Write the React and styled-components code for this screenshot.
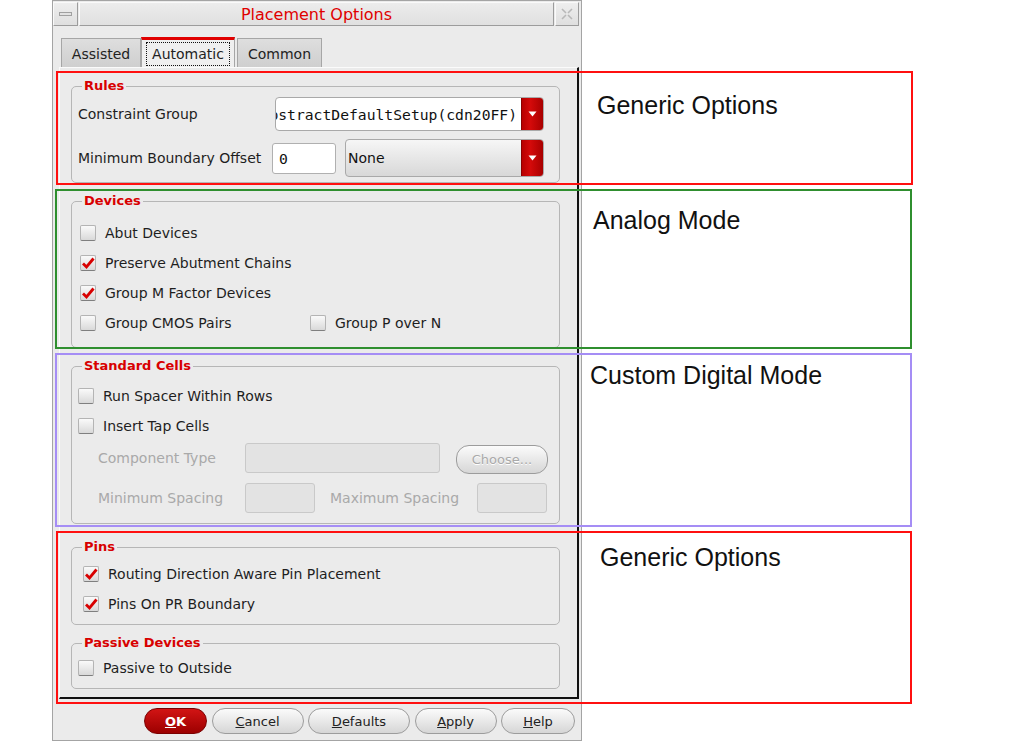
import React from 'react';
import styled, { createGlobalStyle } from 'styled-components';

const GlobalStyle = createGlobalStyle`
  * { box-sizing: border-box; }
  html, body { margin: 0; padding: 0; background: #fff; }
  body { font-family: "DejaVu Sans", sans-serif; color: #1e1e1e; }
`;

const Stage = styled.div`
  position: relative;
  width: 1013px;
  height: 744px;
  padding-left: 52px;
  background: #fff;
`;

const Dialog = styled.div`
  width: 530px;
  height: 741px;
  border: 1px solid #a4a4a4;
  background: #ebebeb;
  display: flex;
  flex-direction: column;
`;

const TitleBar = styled.div`
  display: flex;
  height: 24px;
  margin: 1px 2px 0 0;
  gap: 1px;
`;

const TitleButton = styled.div`
  width: ${p => p.$w}px;
  flex: none;
  display: flex;
  align-items: center;
  justify-content: center;
  background: linear-gradient(#eeeeee, #dfdfdf);
  border: 1px solid;
  border-color: #fafafa #9c9c9c #9c9c9c #fafafa;
`;

const MinGlyph = styled.span`
  width: 13px;
  height: 4px;
  border: 1px solid #a0a0a0;
  background: #e2e2e2;
`;

const TitleText = styled.div`
  flex: 1;
  display: flex;
  align-items: center;
  justify-content: center;
  font-size: 16px;
  color: #e00000;
  background: linear-gradient(#ececec, #e0e0e0);
  border: 1px solid;
  border-color: #fafafa #9c9c9c #9c9c9c #fafafa;
`;

const TabRow = styled.div`
  display: flex;
  align-items: flex-end;
  height: 30px;
  margin-top: 11px;
  padding-left: 8px;
`;

const Tab = styled.div`
  width: ${p => p.$w}px;
  height: ${p => (p.$active ? 30 : 29)}px;
  display: flex;
  align-items: center;
  justify-content: center;
  font-size: 14px;
  color: #222;
  background: ${p => (p.$active ? '#efefef' : 'linear-gradient(#dedede, #cfcfcf)')};
  border: 1px solid #a6a6a6;
  border-bottom: none;
  border-top: ${p => (p.$active ? '3px solid #e00000' : '1px solid #a6a6a6')};
  margin-right: ${p => p.$mr || 0}px;
  padding-top: ${p => (p.$active ? 0 : 2)}px;
`;

const FocusRect = styled.span`
  display: flex;
  align-items: center;
  justify-content: center;
  width: calc(100% - 8px);
  height: calc(100% - 3px);
  border: 1px dotted #111;
`;

const Panel = styled.div`
  height: 632px;
  margin: 0 2px 0 6px;
  border-left: 1px solid #fbfbfb;
  border-top: 1px solid #fbfbfb;
  border-right: 2px solid #111;
  border-bottom: 2px solid #111;
  padding: 0 17px 0 11px;
  display: flex;
  flex-direction: column;
`;

const Group = styled.fieldset`
  margin: ${p => p.$mt}px 0 0;
  height: ${p => p.$h}px;
  padding: 0;
  border: 1px solid #b6b6b6;
  border-radius: 5px;
  min-width: 0;
`;

const Legend = styled.legend`
  margin-left: 10px;
  padding: 0 2px;
  font-weight: bold;
  font-size: 13px;
  line-height: 14px;
  color: #d80000;
`;

const GroupBody = styled.div`
  display: flex;
  flex-direction: column;
  padding: ${p => p.$pad};
`;

const Row = styled.div`
  display: flex;
  align-items: center;
  height: ${p => p.$h || 30}px;
  margin-top: ${p => p.$mt || 0}px;
  padding-left: ${p => p.$indent || 0}px;
`;

const FieldLabel = styled.span`
  font-size: 14px;
  color: ${p => (p.$disabled ? '#a9a9a9' : '#1e1e1e')};
  width: ${p => (p.$w ? `${p.$w}px` : 'auto')};
  flex: ${p => (p.$w ? 'none' : 1)};
  margin-left: ${p => p.$ml || 0}px;
  white-space: nowrap;
`;

const Combo = styled.div`
  width: ${p => p.$w}px;
  height: ${p => p.$h}px;
  flex: none;
  display: flex;
  border: 1px solid #a9a9a9;
  border-radius: 4px;
  overflow: hidden;
  background: ${p => (p.$white ? '#fff' : 'linear-gradient(#f6f6f6, #d8d8d8)')};
`;

const ComboText = styled.div`
  flex: 1;
  min-width: 0;
  overflow: hidden;
  display: flex;
  align-items: center;
  justify-content: ${p => (p.$end ? 'flex-end' : 'flex-start')};
  padding: ${p => (p.$end ? '0 4px 0 0' : '0 0 0 2px')};
  font-family: ${p => (p.$mono ? '"DejaVu Sans Mono", monospace' : '"DejaVu Sans", sans-serif')};
  font-size: ${p => (p.$mono ? '14.7px' : '14px')};
  color: #111;
  white-space: nowrap;

  span { flex: none; }
`;

const ArrowButton = styled.div`
  width: 22px;
  flex: none;
  display: flex;
  align-items: center;
  justify-content: center;
  background: linear-gradient(90deg, #b80000, #d40a0a 40%, #a80000);
  border-left: 1px solid #8a0000;
`;

const TextInput = styled.div`
  width: ${p => p.$w}px;
  height: ${p => p.$h || 30}px;
  flex: none;
  display: flex;
  align-items: center;
  padding-left: 6px;
  margin-left: ${p => p.$ml || 0}px;
  margin-right: ${p => p.$mr || 0}px;
  font-family: "DejaVu Sans Mono", monospace;
  font-size: 14.7px;
  color: #111;
  border: 1px solid ${p => (p.$disabled ? '#c9c9c9' : '#b0b0b0')};
  border-radius: 3px;
  background: ${p => (p.$disabled ? '#e3e3e3' : '#fff')};
`;

const CheckItem = styled.label`
  display: flex;
  align-items: center;
  gap: 9px;
  width: ${p => (p.$w ? `${p.$w}px` : 'auto')};
  font-size: 14px;
  color: #1e1e1e;
  white-space: nowrap;
`;

const CheckBox = styled.span`
  width: 16px;
  height: 16px;
  flex: none;
  border-radius: 2px;
  border: 1px solid #b4b4b4;
  border-bottom-color: #7f7f7f;
  background: linear-gradient(#fafafa, #d9d9d9);
  display: flex;
  align-items: center;
  justify-content: center;
`;

const PillButton = styled.div`
  width: ${p => p.$w}px;
  height: ${p => p.$h || 26}px;
  flex: none;
  display: flex;
  align-items: center;
  justify-content: center;
  border-radius: 13px;
  font-size: 13px;
  border: 1px solid ${p => (p.$primary ? '#7a0000' : '#9c9c9c')};
  background: ${p =>
    p.$primary ? 'linear-gradient(#d21414, #9c0000)' : 'linear-gradient(#fbfbfb, #d6d6d6)'};
  color: ${p => (p.$primary ? '#fff' : p.$disabled ? '#a9a9a9' : '#222')};
  font-weight: ${p => (p.$primary ? 'bold' : 'normal')};
  margin-left: ${p => p.$ml || 0}px;
  margin-top: ${p => p.$mt || 0}px;
  text-shadow: ${p => (p.$disabled ? '0 1px 0 #fff' : 'none')};
`;

const Footer = styled.div`
  display: flex;
  justify-content: flex-end;
  gap: 4.5px;
  height: 26px;
  margin-top: 9px;
  padding-right: 6px;
`;

const Callout = styled.div`
  position: absolute;
  left: ${p => p.$x}px;
  top: ${p => p.$y}px;
  width: ${p => p.$w}px;
  height: ${p => p.$h}px;
  border: 2px solid ${p => p.$color};
  padding: ${p => p.$pt}px 0 0 ${p => p.$pl}px;
  font-family: "Liberation Sans", Arial, sans-serif;
  font-size: 25px;
  line-height: 25px;
  color: #111;
  pointer-events: none;
`;

const Arrow = () => (
  <svg width="9" height="6" viewBox="0 0 9 6">
    <path d="M0.5 0.5 H8.5 L4.5 5.5 Z" fill="#fff" />
  </svg>
);

const Check = ({ on }) => (
  <CheckBox>
    {on && (
      <svg width="14" height="14" viewBox="0 0 14 14">
        <path d="M2 7.5 L5.5 11 L12.5 2.5" fill="none" stroke="#d80000" strokeWidth="2.8" strokeLinejoin="miter" />
      </svg>
    )}
  </CheckBox>
);

const Option = ({ on, w, children }) => (
  <CheckItem $w={w}>
    <Check on={on} />
    {children}
  </CheckItem>
);

const CloseGlyph = () => (
  <svg width="14" height="14" viewBox="0 0 14 14">
    <path d="M2 2 L6 6 M8 8 L12 12 M12 2 L8 6 M6 8 L2 12" stroke="#b8b8b8" strokeWidth="1.6" />
  </svg>
);

export default function App() {
  return (
    <Stage>
      <GlobalStyle />
      <Dialog>
        <TitleBar>
          <TitleButton $w={25}><MinGlyph /></TitleButton>
          <TitleText>Placement Options</TitleText>
          <TitleButton $w={24}><CloseGlyph /></TitleButton>
        </TitleBar>

        <TabRow>
          <Tab $w={80}>Assisted</Tab>
          <Tab $w={94} $active $mr={2}><FocusRect>Automatic</FocusRect></Tab>
          <Tab $w={85}>Common</Tab>
        </TabRow>

        <Panel>
          <Group $mt={11} $h={104}>
            <Legend>Rules</Legend>
            <GroupBody $pad="4px 15px 0 6px">
              <Row $h={34}>
                <FieldLabel>Constraint Group</FieldLabel>
                <Combo $w={269} $h={34} $white>
                  <ComboText $mono $end><span>AbstractDefaultSetup(cdn20FF)</span></ComboText>
                  <ArrowButton><Arrow /></ArrowButton>
                </Combo>
              </Row>
              <Row $h={38} $mt={8}>
                <FieldLabel>Minimum Boundary Offset</FieldLabel>
                <TextInput $w={64} $h={31} $mr={9}>0</TextInput>
                <Combo $w={199} $h={38}>
                  <ComboText><span>None</span></ComboText>
                  <ArrowButton><Arrow /></ArrowButton>
                </Combo>
              </Row>
            </GroupBody>
          </Group>

          <Group $mt={11} $h={154}>
            <Legend>Devices</Legend>
            <GroupBody $pad="10px 0 0 8px">
              <Row><Option>Abut Devices</Option></Row>
              <Row><Option on>Preserve Abutment Chains</Option></Row>
              <Row><Option on>Group M Factor Devices</Option></Row>
              <Row>
                <Option w={230}>Group CMOS Pairs</Option>
                <Option>Group P over N</Option>
              </Row>
            </GroupBody>
          </Group>

          <Group $mt={11} $h={165}>
            <Legend>Standard Cells</Legend>
            <GroupBody $pad="8px 0 0 6px">
              <Row><Option>Run Spacer Within Rows</Option></Row>
              <Row><Option>Insert Tap Cells</Option></Row>
              <Row $mt={2} $indent={20}>
                <FieldLabel $disabled $w={147}>Component Type</FieldLabel>
                <TextInput $disabled $w={195} />
                <PillButton $disabled $w={92} $h={29} $ml={16} $mt={3}>Choose...</PillButton>
              </Row>
              <Row $mt={10} $indent={20}>
                <FieldLabel $disabled $w={147}>Minimum Spacing</FieldLabel>
                <TextInput $disabled $w={70} />
                <FieldLabel $disabled $w={147} $ml={15}>Maximum Spacing</FieldLabel>
                <TextInput $disabled $w={70} />
              </Row>
            </GroupBody>
          </Group>

          <Group $mt={16} $h={85}>
            <Legend>Pins</Legend>
            <GroupBody $pad="5px 0 0 11px">
              <Row><Option on>Routing Direction Aware Pin Placement</Option></Row>
              <Row><Option on>Pins On PR Boundary</Option></Row>
            </GroupBody>
          </Group>

          <Group $mt={11} $h={53}>
            <Legend>Passive Devices</Legend>
            <GroupBody $pad="3px 0 0 6px">
              <Row><Option>Passive to Outside</Option></Row>
            </GroupBody>
          </Group>
        </Panel>

        <Footer>
          <PillButton $primary $w={63}><u>O</u>K</PillButton>
          <PillButton $w={92}><u>C</u>ancel</PillButton>
          <PillButton $w={102}><u>D</u>efaults</PillButton>
          <PillButton $w={82}><u>A</u>pply</PillButton>
          <PillButton $w={74}><u>H</u>elp</PillButton>
        </Footer>
      </Dialog>

      <Callout $x={56} $y={71} $w={857} $h={114} $color="#ff1010" $pt={20} $pl={539}>Generic Options</Callout>
      <Callout $x={55} $y={189} $w={857} $h={160} $color="#2f8f2f" $pt={17} $pl={536}>Analog Mode</Callout>
      <Callout $x={55} $y={353} $w={857} $h={174} $color="#a58df5" $pt={8} $pl={533}>Custom Digital Mode</Callout>
      <Callout $x={56} $y={531} $w={856} $h={173} $color="#ff1010" $pt={12} $pl={542}>Generic Options</Callout>
    </Stage>
  );
}
